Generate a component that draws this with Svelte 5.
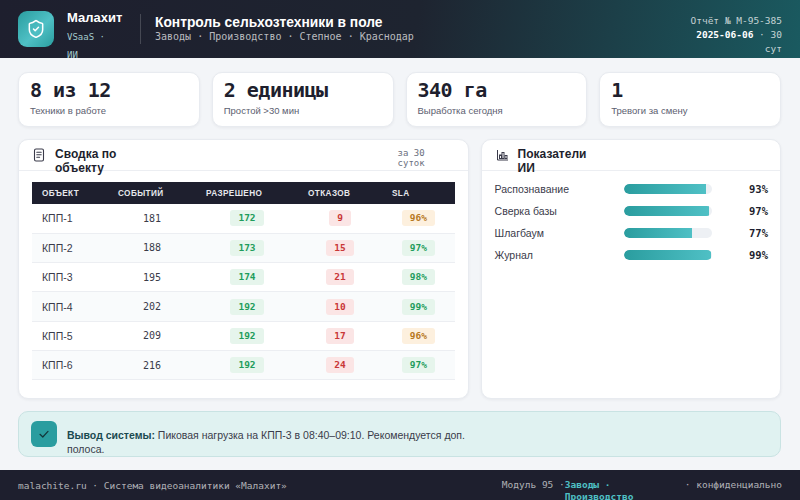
<script lang="ts">
	const kpis = [
		{ value: '8 из 12', label: 'Техники в работе' },
		{ value: '2 единицы', label: 'Простой >30 мин' },
		{ value: '340 га', label: 'Выработка сегодня' },
		{ value: '1', label: 'Тревоги за смену' }
	];

	const rows = [
		{ name: 'КПП-1', events: 181, ok: 172, denied: 9, sla: 96 },
		{ name: 'КПП-2', events: 188, ok: 173, denied: 15, sla: 97 },
		{ name: 'КПП-3', events: 195, ok: 174, denied: 21, sla: 98 },
		{ name: 'КПП-4', events: 202, ok: 192, denied: 10, sla: 99 },
		{ name: 'КПП-5', events: 209, ok: 192, denied: 17, sla: 96 },
		{ name: 'КПП-6', events: 216, ok: 192, denied: 24, sla: 97 }
	];

	const metrics = [
		{ label: 'Распознавание', value: 93 },
		{ label: 'Сверка базы', value: 97 },
		{ label: 'Шлагбаум', value: 77 },
		{ label: 'Журнал', value: 99 }
	];
</script>

<div class="page">
	<header class="topbar">
		<div class="logo">
			<svg width="20" height="20" viewBox="0 0 24 24" fill="none" stroke="#fff" stroke-width="1.800" stroke-linecap="round" stroke-linejoin="round">
				<path d="M20 13c0 5-3.500 7.500-7.660 8.950a1 1 0 0 1-.67-.01C7.500 20.500 4 18 4 13V6a1 1 0 0 1 1-1c2 0 4.500-1.200 6.240-2.720a1.170 1.170 0 0 1 1.520 0C14.510 3.810 17 5 19 5a1 1 0 0 1 1 1z" />
				<path d="M9 12l2 2 4-4" />
			</svg>
		</div>
		<div class="brand">
			<strong>Малахит</strong>
			<span>VSaaS · ИИ</span>
		</div>
		<div class="heading">
			<h1>Контроль сельхозтехники в поле</h1>
			<p>Заводы · Производство · Степное · Краснодар</p>
		</div>
		<div class="report">
			<div>Отчёт № М-95-385</div>
			<div><b>2025-06-06</b> · 30 сут</div>
		</div>
	</header>

	<main class="content">
		<section class="kpis">
			{#each kpis as kpi}
				<div class="kpi">
					<div class="kpi-value">{kpi.value}</div>
					<div class="kpi-label">{kpi.label}</div>
				</div>
			{/each}
		</section>

		<section class="panels">
			<div class="panel">
				<div class="panel-head">
					<svg width="14" height="14" viewBox="0 0 14 14" fill="none" stroke="#3a3b4a" stroke-width="1.100" stroke-linecap="round">
						<rect x="2.500" y="1" width="9" height="12" rx="1.500" />
						<path d="M4.800 4.300h4.400M4.800 6.800h4.400M4.800 9.300h2.800" />
					</svg>
					<h2>Сводка по объекту</h2>
					<span class="period">за 30 суток</span>
				</div>
				<div class="table-wrap">
					<table>
						<colgroup>
							<col style="width: 76px" />
							<col style="width: 88px" />
							<col style="width: 102px" />
							<col style="width: 84px" />
							<col />
						</colgroup>
						<thead>
							<tr>
								<th>Объект</th>
								<th>Событий</th>
								<th>Разрешено</th>
								<th>Отказов</th>
								<th>SLA</th>
							</tr>
						</thead>
						<tbody>
							{#each rows as row}
								<tr>
									<td class="name">{row.name}</td>
									<td class="num">{row.events}</td>
									<td><span class="badge good">{row.ok}</span></td>
									<td><span class="badge bad">{row.denied}</span></td>
									<td><span class="badge" class:good={row.sla > 96} class:warn={row.sla <= 96}>{row.sla}%</span></td>
								</tr>
							{/each}
						</tbody>
					</table>
				</div>
			</div>

			<div class="panel">
				<div class="panel-head">
					<svg width="14" height="14" viewBox="0 0 14 14" fill="none" stroke="#3a3b4a" stroke-width="1">
						<path d="M2.500 2v10h10.500" />
						<rect x="4.500" y="7" width="2" height="3.500" />
						<rect x="7" y="4.500" width="2" height="6" />
						<rect x="10" y="7.500" width="2" height="3" />
					</svg>
					<h2>Показатели ИИ</h2>
				</div>
				<div class="metrics">
					{#each metrics as metric}
						<div class="metric">
							<span class="metric-label">{metric.label}</span>
							<div class="track"><div class="fill" style="width: {metric.value}%"></div></div>
							<span class="metric-value">{metric.value}%</span>
						</div>
					{/each}
				</div>
			</div>
		</section>

		<section class="conclusion">
			<div class="check">
				<svg width="14" height="14" viewBox="0 0 14 14" fill="none" stroke="#12363a" stroke-width="1.200" stroke-linecap="round" stroke-linejoin="round">
					<path d="M3 7.300l2.800 2.700 5.200-5.600" />
				</svg>
			</div>
			<p><b>Вывод системы:</b> Пиковая нагрузка на КПП-3 в 08:40–09:10. Рекомендуется доп. полоса.</p>
		</section>
	</main>

	<footer class="footer">
		<span>malachite.ru · Система видеоаналитики «Малахит»</span>
		<div class="footer-right">
			<span>Модуль 95 ·</span>
			<b>Заводы · Производство</b>
			<span>· конфиденциально</span>
		</div>
	</footer>
</div>

<style>
	:global(body) {
		margin: 0;
		background: #f3f5f8;
	}

	.page {
		width: 800px;
		height: 500px;
		overflow: hidden;
		display: flex;
		flex-direction: column;
		background: #f3f5f8;
		font-family: 'Liberation Sans', sans-serif;
		color: #1e1f2e;
	}

	.topbar {
		height: 58px;
		flex: none;
		box-sizing: border-box;
		display: flex;
		align-items: center;
		padding: 0 18px;
		background: linear-gradient(100deg, #1e1f2e 0%, #1e2430 52%, #1a5a60 100%);
		color: #fff;
		overflow: hidden;
	}

	.logo {
		width: 36px;
		height: 36px;
		flex: none;
		border-radius: 9px;
		display: grid;
		place-items: center;
		background: linear-gradient(135deg, #2a9d9f, #4fc0c5 55%, #2a9d9f);
		margin-right: 13px;
	}

	.brand {
		width: 60px;
		flex: none;
		padding-right: 13px;
		border-right: 1px solid rgba(255, 255, 255, 0.18);
		margin-right: 14px;
		height: 30px;
	}

	.brand strong {
		display: block;
		font-size: 13px;
		line-height: 14px;
		margin-top: -3px;
	}

	.brand span {
		display: block;
		width: 48px;
		margin-top: 3px;
		font-family: 'DejaVu Sans Mono', monospace;
		font-size: 9px;
		line-height: 18px;
		color: #a3c9cc;
	}

	.heading {
		flex: 1;
	}

	.heading h1 {
		margin: -1px 0 0;
		font-size: 13.800px;
		line-height: 15px;
		font-weight: 700;
	}

	.heading p {
		margin: 0;
		font-family: 'DejaVu Sans Mono', monospace;
		font-size: 10px;
		line-height: 13px;
		color: rgba(255, 255, 255, 0.7);
	}

	.report {
		width: 100px;
		margin-top: 12px;
		text-align: right;
		font-family: 'DejaVu Sans Mono', monospace;
		font-size: 9.500px;
		line-height: 14px;
		color: rgba(255, 255, 255, 0.75);
	}

	.report b {
		color: #fff;
	}

	.content {
		flex: 1;
		min-height: 0;
		box-sizing: border-box;
		display: flex;
		flex-direction: column;
		padding: 14px 19px 13px 18px;
		gap: 12px;
	}

	.kpis {
		display: grid;
		grid-template-columns: repeat(4, 1fr);
		gap: 12px;
	}

	.kpi {
		height: 55px;
		box-sizing: border-box;
		padding: 5px 11px;
		background: #fff;
		border-radius: 10px;
		border: 1px solid #e8ebf0;
		box-shadow: 0 1px 3px rgba(30, 31, 46, 0.06);
	}

	.kpi-value {
		font-family: 'DejaVu Sans Mono', monospace;
		font-weight: 700;
		font-size: 20px;
		letter-spacing: -0.5px;
		line-height: 24px;
	}

	.kpi-label {
		margin-top: 3px;
		font-size: 9.500px;
		line-height: 12px;
		color: #5c6070;
	}

	.panels {
		flex: 1;
		min-height: 0;
		display: grid;
		grid-template-columns: 1.5fr 1fr;
		gap: 12px;
	}

	.panel {
		background: #fff;
		border-radius: 10px;
		border: 1px solid #e8ebf0;
		box-shadow: 0 1px 3px rgba(30, 31, 46, 0.06);
		overflow: hidden;
	}

	.panel-head {
		height: 31px;
		box-sizing: border-box;
		display: flex;
		align-items: center;
		gap: 9px;
		padding: 0 13px;
		border-bottom: 1px solid #eceef2;
	}

	.panel-head h2 {
		width: 76px;
		margin: 0;
		font-size: 12px;
		line-height: 14px;
		font-weight: 700;
		position: relative;
		top: 6px;
	}

	.period {
		margin-left: auto;
		margin-right: 27px;
		padding-top: 6px;
		width: 30px;
		font-family: 'DejaVu Sans Mono', monospace;
		font-size: 9px;
		line-height: 10px;
		color: #6b7080;
	}

	.table-wrap {
		padding: 11px 13px;
	}

	table {
		width: 100%;
		table-layout: fixed;
		border-collapse: collapse;
	}

	th {
		height: 22px;
		padding: 0 10px;
		background: #1e1f2e;
		color: #e6e7ec;
		text-align: left;
		font-size: 8.200px;
		font-weight: 700;
		letter-spacing: 0.4px;
		text-transform: uppercase;
	}

	td {
		box-sizing: border-box;
		height: 29.330px;
		padding: 0 10px;
		text-align: center;
		font-family: 'DejaVu Sans Mono', monospace;
		font-size: 10px;
		color: #3a3b4a;
		border-bottom: 1px solid #eceef2;
	}

	tbody tr:nth-child(even) td {
		background: #f9fbfc;
	}

	td.name {
		text-align: left;
		font-family: 'Liberation Sans', sans-serif;
		font-size: 10.500px;
	}

	.badge {
		display: inline-block;
		padding: 1px 8px;
		line-height: 14px;
		border-radius: 3px;
		font-size: 9.500px;
		font-weight: 700;
	}

	.good {
		background: #e6f5ec;
		color: #1f9d5c;
	}

	.bad {
		background: #fbe5e5;
		color: #c93838;
	}

	.warn {
		background: #fdf0de;
		color: #b7791f;
	}

	.metrics {
		padding: 10px 12px 10px 13px;
		display: flex;
		flex-direction: column;
		gap: 6px;
	}

	.metric {
		height: 16px;
		display: flex;
		align-items: center;
		font-size: 10.500px;
		color: #3a3b4a;
	}

	.metric-label {
		width: 129.400px;
		flex: none;
	}

	.track {
		width: 88px;
		height: 10px;
		flex: none;
		border-radius: 5px;
		background: #edf0f4;
		overflow: hidden;
	}

	.fill {
		height: 100%;
		border-radius: 5px 0 0 5px;
		background: linear-gradient(90deg, #2a9d9f, #4fc0c5);
	}

	.metric-value {
		margin-left: auto;
		font-family: 'DejaVu Sans Mono', monospace;
		font-size: 10.500px;
		font-weight: 700;
		color: #1e1f2e;
	}

	.conclusion {
		height: 46px;
		flex: none;
		box-sizing: border-box;
		display: flex;
		align-items: center;
		gap: 10px;
		padding: 0 12px;
		border: 1px solid #c9e3e3;
		border-radius: 10px;
		background: #e0f2f1;
	}

	.check {
		width: 26px;
		height: 26px;
		flex: none;
		border-radius: 6px;
		display: grid;
		place-items: center;
		background: #2a9d9f;
	}

	.conclusion p {
		width: 420px;
		margin: 16px 0 0;
		font-size: 10.500px;
		line-height: 14px;
		color: #3a3b4a;
	}

	.conclusion b {
		color: #1a4a50;
	}

	.footer {
		height: 30px;
		flex: none;
		box-sizing: border-box;
		display: flex;
		align-items: center;
		justify-content: space-between;
		padding: 0 18px;
		background: #1e1f2e;
		font-family: 'DejaVu Sans Mono', monospace;
		font-size: 9.500px;
		color: rgba(255, 255, 255, 0.65);
	}

	.footer-right {
		display: flex;
		align-items: flex-start;
		height: 100%;
		padding-top: 9px;
		box-sizing: border-box;
		line-height: 11.500px;
	}

	.footer-right b {
		width: 120px;
		color: #4fc0c5;
	}
</style>
